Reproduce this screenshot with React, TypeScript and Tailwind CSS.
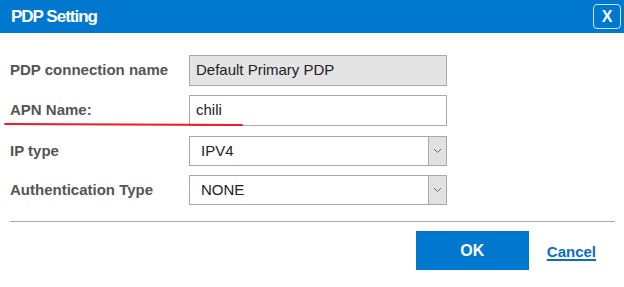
import React from "react";

function Select({ value }: { value: string }) {
  return (
    <div className="flex h-[30px] w-[258px] border border-[#a9a9a9] bg-white">
      <div className="flex flex-1 items-center pl-[11px] text-[15px] text-[#222]">{value}</div>
      <div className="flex w-[18px] items-center justify-center border-l border-[#a9a9a9] bg-[#e1e1e1]">
        <svg width="9" height="6" viewBox="0 0 9 6">
          <path d="M1 1 L4.5 4.5 L8 1" fill="none" stroke="#666" strokeWidth="1" />
        </svg>
      </div>
    </div>
  );
}

export default function App() {
  return (
    <div className="relative h-[287px] w-[624px] bg-white" style={{ fontFamily: '"Liberation Sans", Arial, sans-serif' }}>
      <div className="flex h-[33px] items-center justify-between bg-[#0078d0] pl-[11px] pr-[3px]">
        <span className="text-[17px] font-bold tracking-[-1px] text-white">PDP Setting</span>
        <div className="flex h-[25px] w-[28px] items-center justify-center rounded-[4px] border border-[#cfe4f7] text-[16px] font-bold text-white">
          X
        </div>
      </div>
      <div className="flex flex-col gap-[9px] pl-[10px] pr-[10px] pt-[22px]">
        <div className="flex items-center">
          <div className="w-[179px] text-[15px] font-bold text-[#555]">PDP connection name</div>
          <div className="flex h-[31px] w-[258px] items-center border border-[#a9a9a9] bg-[#e4e4e4] pl-[6px] text-[15px] text-[#222]">
            Default Primary PDP
          </div>
        </div>
        <div className="relative flex items-center">
          <div className="w-[179px] text-[15px] font-bold text-[#555]">APN Name:</div>
          <div className="flex h-[31px] w-[258px] items-center border border-[#a9a9a9] bg-white pl-[6px] text-[15px] text-[#222]">
            chili
          </div>
          <svg className="absolute left-[-6px] top-[27px]" width="240" height="5" viewBox="0 0 240 5">
            <path d="M1 2 Q120 2.5 238 3" fill="none" stroke="#ee1c25" strokeWidth="1.8" strokeLinecap="round" />
          </svg>
        </div>
        <div className="mt-[1px] flex items-center">
          <div className="w-[179px] text-[15px] font-bold text-[#555]">IP type</div>
          <Select value="IPV4" />
        </div>
        <div className="flex items-center">
          <div className="w-[179px] text-[15px] font-bold text-[#555]">Authentication Type</div>
          <Select value="NONE" />
        </div>
        <div className="mt-[7px] h-px w-[605px] bg-[#a9a9a9]" />
        <div className="mt-[0px] flex items-center justify-end pr-[18px]">
          <div className="flex h-[39px] w-[113px] items-center justify-center bg-[#0078d0] text-[16px] font-bold text-white">
            OK
          </div>
          <div className="ml-[18px] mt-[4px] text-[15px] font-bold text-[#0a6fc2] underline decoration-2 underline-offset-2">
            Cancel
          </div>
        </div>
      </div>
    </div>
  );
}
